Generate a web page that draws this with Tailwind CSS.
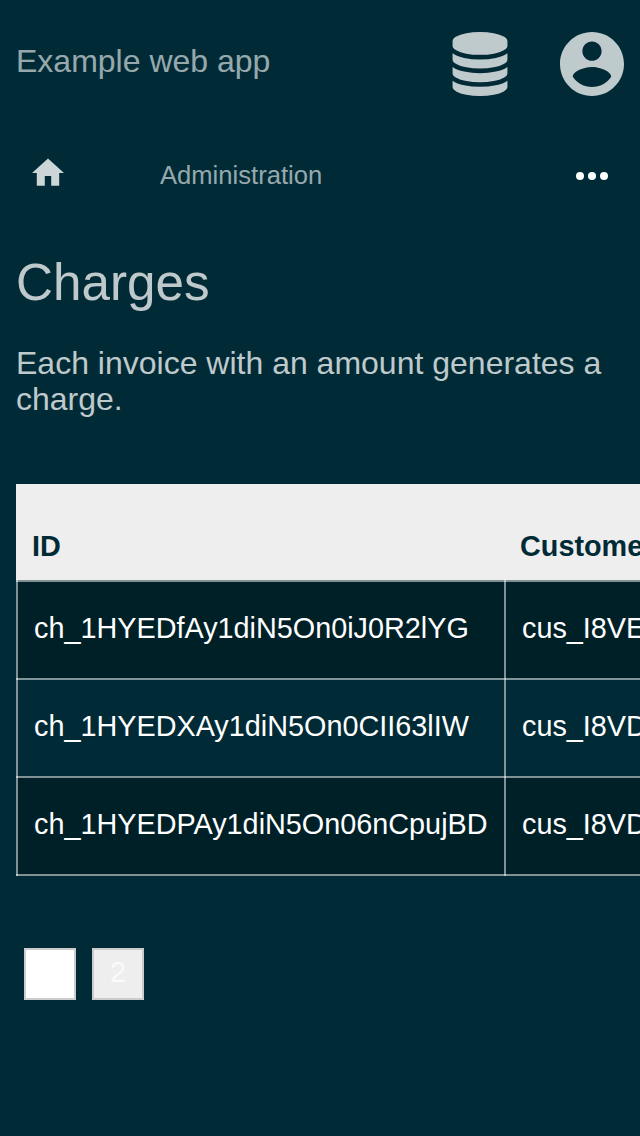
<!DOCTYPE html>
<html lang="en">
<head>
<meta charset="utf-8">
<title>Charges</title>
<script src="https://cdn.jsdelivr.net/npm/@tailwindcss/browser@4"></script>
</head>
<body class="h-[1136px] w-[640px] overflow-hidden bg-[#002b36] font-['Liberation_Sans',Arial,sans-serif] text-white">
<header class="flex h-32 items-center justify-between px-4">
  <div class="-mt-1.5 text-[32px] leading-9 text-white/60">Example web app</div>
  <div class="flex gap-12">
    <svg class="size-16" viewBox="0 0 1792 1792" fill="#bfcacd"><path d="M896 768q237 0 443-43t325-127v170q0 69-103 128t-280 93.5-385 34.5-385-34.5-280-93.5-103-128v-170q119 84 325 127t443 43zm0 768q237 0 443-43t325-127v170q0 69-103 128t-280 93.5-385 34.5-385-34.5-280-93.5-103-128v-170q119 84 325 127t443 43zm0-384q237 0 443-43t325-127v170q0 69-103 128t-280 93.5-385 34.5-385-34.5-280-93.5-103-128v-170q119 84 325 127t443 43zm0-1152q208 0 385 34.5t280 93.5 103 128v128q0 69-103 128t-280 93.5-385 34.5-385-34.5-280-93.5-103-128v-128q0-69 103-128t280-93.5 385-34.5z"/></svg>
    <svg class="size-16" viewBox="2 2 20 20" fill="#bfcacd"><path d="M12 2C6.48 2 2 6.48 2 12s4.480 10 10 10 10-4.480 10-10S17.520 2 12 2zm0 3c1.660 0 3 1.340 3 3s-1.340 3-3 3-3-1.340-3-3 1.340-3 3-3zm0 14.200c-2.500 0-4.710-1.280-6-3.220.03-1.990 4-3.080 6-3.080 1.990 0 5.970 1.090 6 3.080-1.290 1.940-3.500 3.220-6 3.220z"/></svg>
  </div>
</header>
<nav class="flex h-24 items-center px-8">
  <svg class="-mt-2 h-7 w-8" viewBox="2 2.700 20 17.500" fill="#ccd5d7"><path d="M10 20v-6h4v6h5v-8h3L12 3 2 12h3v8z"/></svg>
  <span class="-mt-0.5 ml-24 text-[25.6px] leading-8 text-white/60">Administration</span>
  <div class="ml-auto flex gap-1">
    <i class="size-2 rounded-full bg-white"></i><i class="size-2 rounded-full bg-white"></i><i class="size-2 rounded-full bg-white"></i>
  </div>
</nav>
<main class="pl-4">
  <h1 class="pt-[30px] text-[51.2px] leading-[58px] text-white/75">Charges</h1>
  <p class="mt-[33px] text-[32px] leading-9 text-white/75">Each invoice with an amount generates a charge.</p>
  <div class="mt-[67px] overflow-hidden">
  <div class="w-[900px] text-[28.8px] leading-8">
    <div class="flex h-24 items-end bg-[#eee] pb-[18px] font-bold text-[#002b36]">
      <div class="w-[488px] pl-4">ID</div><div class="pl-4">Customer</div>
    </div>
    <div class="flex h-[98px] border-t-2 border-white/50 bg-black/25">
      <i class="-mt-0.5 w-0.5 bg-white/50"></i><div class="flex w-[486px] items-center pb-1 pl-4">ch_1HYEDfAy1diN5On0iJ0R2lYG</div>
      <i class="-mt-0.5 w-0.5 bg-white/50"></i><div class="flex items-center pb-1 pl-4">cus_I8VEmJ0hNvW2xT</div>
    </div>
    <div class="flex h-[98px] border-t-2 border-white/50">
      <i class="-mt-0.5 w-0.5 bg-white/50"></i><div class="flex w-[486px] items-center pb-1 pl-4">ch_1HYEDXAy1diN5On0CII63lIW</div>
      <i class="-mt-0.5 w-0.5 bg-white/50"></i><div class="flex items-center pb-1 pl-4">cus_I8VDkQ4sLb7RzP</div>
    </div>
    <div class="flex h-[100px] border-y-2 border-white/50 bg-black/25">
      <i class="-my-0.5 w-0.5 bg-white/50"></i><div class="flex w-[486px] items-center pb-1 pl-4">ch_1HYEDPAy1diN5On06nCpujBD</div>
      <i class="-my-0.5 w-0.5 bg-white/50"></i><div class="flex items-center pb-1 pl-4">cus_I8VDaG6uYc3MtH</div>
    </div>
  </div>
  </div>
  <div class="mt-[72px] ml-2 flex gap-4 text-[28.8px] leading-[44px]">
    <div class="size-[52px] border-2 border-[#ccc] bg-white text-center text-white">1</div>
    <div class="size-[52px] border-2 border-[#ccc] bg-[#eee] text-center text-white/75">2</div>
  </div>
</main>
</body>
</html>
